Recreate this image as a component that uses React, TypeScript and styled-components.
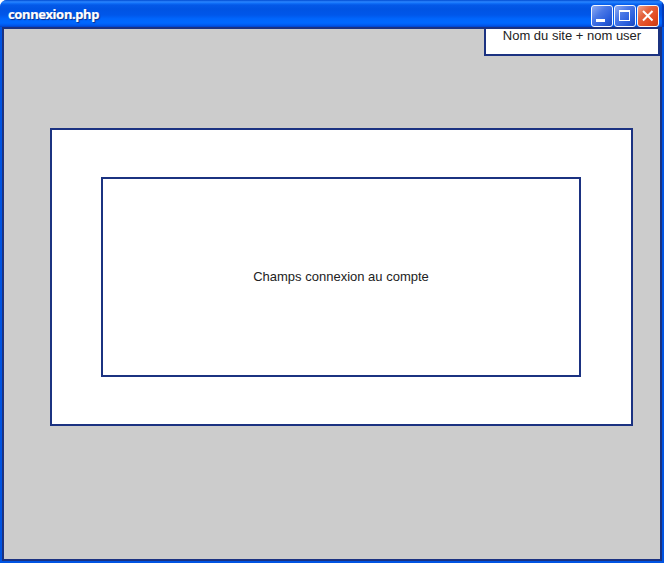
import React from "react";
import styled, { createGlobalStyle } from "styled-components";

const NAVY = "#1b3281";

const GlobalStyle = createGlobalStyle`
  *, *::before, *::after { box-sizing: border-box; }
  body { margin: 0; background: #fff; overflow: hidden; }
`;

const Window = styled.main`
  display: flex;
  flex-direction: column;
  width: 664px;
  height: 563px;
  padding: 0 2px 2px;
  background: #0054e3;
  border-radius: 7px 7px 0 0;
  overflow: hidden;
`;

const TitleBar = styled.header`
  display: flex;
  align-items: center;
  justify-content: space-between;
  flex: 0 0 27px;
  margin: 0 -2px;
  padding: 4px 5px 0 8px;
  box-shadow: inset -2px 0 1px #0039b8;
  background: linear-gradient(
    to bottom,
    #0453d8 0px,
    #2c86ff 2px,
    #1273fa 3px,
    #0459e8 5px,
    #0054e3 9px,
    #0057ea 15px,
    #0066fd 19px,
    #0068ff 23px,
    #005af0 25px,
    #0046cf 27px
  );
`;

const Title = styled.h1`
  margin: 0;
  padding-bottom: 2px;
  font: 700 13px/17px "Noto Sans", sans-serif;
  letter-spacing: -0.36px;
  color: #fff;
  -webkit-text-stroke: 0.2px #fff;
  text-shadow: 1px 1px 1px #0b2b86;
`;

const Controls = styled.div`
  display: flex;
  gap: 1px;
`;

const ControlButton = styled.button<{ $danger?: boolean }>`
  display: block;
  width: 22px;
  height: 22px;
  padding: 0;
  border: 1px solid #f4f7ff;
  border-radius: 3px;
  background: ${({ $danger }) =>
    $danger
      ? "linear-gradient(135deg, #f0a48c 0%, #e4633f 35%, #e2491f 70%, #c63a12 100%)"
      : "linear-gradient(135deg, #8fabf2 0%, #4a78e6 38%, #2b5fdd 70%, #1746bd 100%)"};

  svg { display: block; }
`;

const Client = styled.section`
  display: flex;
  flex: 1;
  flex-direction: column;
  border: 2px solid ${NAVY};
  background: #ccc;
`;

const Box = styled.div`
  display: flex;
  align-items: center;
  justify-content: center;
  border: 2px solid ${NAVY};
  background: #fff;
  color: #222;
  font: 13px/16px "Liberation Sans", Arial, sans-serif;
`;

const UserBox = styled(Box)`
  align-self: flex-end;
  align-items: flex-start;
  width: 176px;
  height: 27px;
  border-top: 0;
  line-height: 14px;
`;

const LoginPanel = styled(Box)`
  width: 583px;
  height: 298px;
  margin: 72px 0 0 46px;
  padding-right: 1px;
`;

const LoginFields = styled(Box)`
  width: 480px;
  height: 200px;
`;

export default function App() {
  return (
    <>
      <GlobalStyle />
      <Window>
        <TitleBar>
          <Title>connexion.php</Title>
          <Controls>
            <ControlButton aria-label="Réduire">
              <svg width="20" height="20" shapeRendering="crispEdges">
                <path d="M4 13h9v3H4z" fill="#fff" />
              </svg>
            </ControlButton>
            <ControlButton aria-label="Agrandir">
              <svg width="20" height="20" shapeRendering="crispEdges">
                <path d="M4 4h11v11H4zM5 6v8h9V6z" fill="#fff" fillRule="evenodd" />
              </svg>
            </ControlButton>
            <ControlButton $danger aria-label="Fermer">
              <svg width="20" height="20">
                <path d="M5 5l9.5 9.5M14.5 5L5 14.5" stroke="#fff" strokeWidth="2" />
              </svg>
            </ControlButton>
          </Controls>
        </TitleBar>
        <Client>
          <UserBox>Nom du site + nom user</UserBox>
          <LoginPanel>
            <LoginFields>Champs connexion au compte</LoginFields>
          </LoginPanel>
        </Client>
      </Window>
    </>
  );
}
